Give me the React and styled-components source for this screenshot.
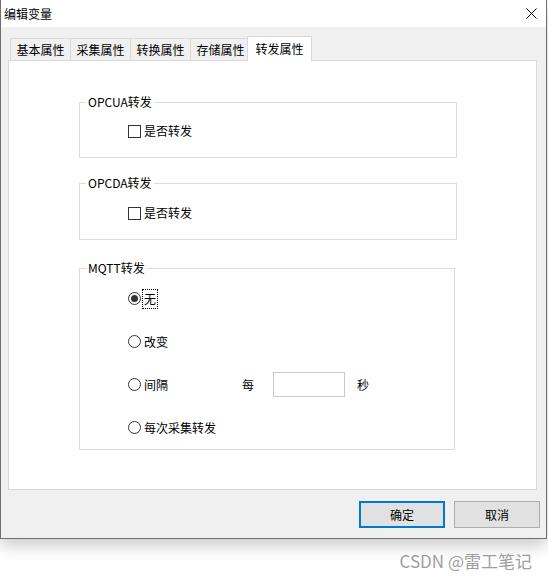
import styled, { createGlobalStyle } from "styled-components";

const GlobalStyle = createGlobalStyle`
  html, body {
    margin: 0;
    background: #ffffff;
  }
  body {
    font-family: "Noto Sans CJK SC", "Noto Sans", sans-serif;
    font-size: 12px;
    color: #000;
  }
`;

const Page = styled.div`
  width: 548px;
  height: 580px;
  display: flex;
  flex-direction: column;
  overflow: hidden;
`;

const Window = styled.div`
  width: 547px;
  height: 539px;
  box-sizing: border-box;
  border: 1px solid #6f6f6f;
  border-top: none;
  background: #f0f0f0;
  box-shadow: 0 6px 16px rgba(0, 0, 0, 0.22);
  display: flex;
  flex-direction: column;
`;

const TitleBar = styled.div`
  height: 27px;
  flex-shrink: 0;
  background: #ffffff;
  display: flex;
  align-items: center;
  justify-content: space-between;
  padding: 0 9px 0 3px;
  line-height: 16px;
`;

const Body = styled.div`
  flex: 1;
  display: flex;
  flex-direction: column;
  padding: 9px 9px 10px 7px;
`;

const TabStrip = styled.div`
  height: 24px;
  display: flex;
  align-items: flex-end;
  padding-left: 2px;
`;

const Tab = styled.div`
  box-sizing: border-box;
  width: ${(p) => (p.$active ? "65px" : "61px")};
  height: ${(p) => (p.$active ? "25px" : "22px")};
  margin: ${(p) => (p.$active ? "0 -2px -1px -3px" : "0 -1px 0 0")};
  border: 1px solid #d9d9d9;
  border-bottom: none;
  background: ${(p) => (p.$active ? "#ffffff" : "#f0f0f0")};
  position: relative;
  z-index: ${(p) => (p.$active ? 2 : 1)};
  display: flex;
  align-items: center;
  justify-content: center;
  line-height: 16px;
`;

const Panel = styled.div`
  box-sizing: border-box;
  width: 529px;
  height: 430px;
  background: #ffffff;
  border: 1px solid #d9d9d9;
  padding: 33px 0 0 70px;
  display: flex;
  flex-direction: column;
`;

const Group = styled.fieldset`
  box-sizing: border-box;
  width: ${(p) => p.$width}px;
  margin: ${(p) => p.$top}px 0 0 0;
  padding: 0;
  border: 1px solid #dcdcdc;
  min-width: 0;
`;

const Legend = styled.legend`
  margin-left: 6px;
  padding: 0 2px;
  line-height: 16px;
  font-size: 12px;
`;

const GroupBody = styled.div`
  display: flex;
  flex-direction: column;
  gap: ${(p) => p.$gap || 0}px;
  padding: ${(p) => p.$pt}px 0 ${(p) => p.$pb}px 48px;
`;

const Row = styled.label`
  display: flex;
  align-items: center;
  height: ${(p) => p.$h || 16}px;
  line-height: 16px;
`;

const Checkbox = styled.span`
  box-sizing: border-box;
  width: 13px;
  height: 13px;
  border: 1px solid #333333;
  background: #ffffff;
  margin-right: 3px;
`;

const Radio = styled.span`
  box-sizing: border-box;
  width: 13px;
  height: 13px;
  border-radius: 50%;
  border: 1px solid #333333;
  background: #ffffff;
  margin-right: 3px;
  display: flex;
  align-items: center;
  justify-content: center;

  &::after {
    content: "";
    width: 7px;
    height: 7px;
    border-radius: 50%;
    background: #333333;
    display: ${(p) => (p.$checked ? "block" : "none")};
  }
`;

const Text = styled.span`
  ${(p) => (p.$focus ? "outline: 1px dotted #000; outline-offset: 1px;" : "")}
  margin-left: ${(p) => p.$ml || 0}px;
`;

const NumberBox = styled.span`
  box-sizing: border-box;
  width: 72px;
  height: 25px;
  margin-left: 19px;
  border: 1px solid #c8c8c8;
  background: #ffffff;
`;

const ButtonRow = styled.div`
  display: flex;
  justify-content: flex-end;
  gap: 9px;
  margin-top: 11px;
  margin-right: -3px;
`;

const Button = styled.button`
  box-sizing: border-box;
  width: 86px;
  height: 27px;
  font-family: inherit;
  font-size: 12px;
  color: #000;
  background: #e1e1e1;
  border: ${(p) => (p.$primary ? "2px solid #0078d7" : "1px solid #adadad")};
  padding: 0;
`;

const Watermark = styled.div`
  align-self: flex-end;
  margin: 12px 16px 0 0;
  font-size: 17px;
  line-height: 20px;
  color: #9e9e9e;
  font-family: "Noto Sans CJK SC", "Noto Sans", sans-serif;
`;

function CloseIcon() {
  return (
    <svg width="11" height="11" viewBox="0 0 11 11">
      <path d="M0.5 0.5 L10.5 10.5 M10.5 0.5 L0.5 10.5" stroke="#000" strokeWidth="1" fill="none" />
    </svg>
  );
}

const tabs = ["基本属性", "采集属性", "转换属性", "存储属性", "转发属性"];

export default function App() {
  return (
    <>
      <GlobalStyle />
      <Page>
        <Window>
          <TitleBar>
            <span>编辑变量</span>
            <CloseIcon />
          </TitleBar>
          <Body>
            <TabStrip>
              {tabs.map((t, i) => (
                <Tab key={t} $active={i === 4}>{t}</Tab>
              ))}
            </TabStrip>
            <Panel>
              <Group $width={378} $top={0}>
                <Legend>OPCUA转发</Legend>
                <GroupBody $pt={13} $pb={18}>
                  <Row>
                    <Checkbox />
                    <Text>是否转发</Text>
                  </Row>
                </GroupBody>
              </Group>

              <Group $width={378} $top={17}>
                <Legend>OPCDA转发</Legend>
                <GroupBody $pt={14} $pb={18}>
                  <Row>
                    <Checkbox />
                    <Text>是否转发</Text>
                  </Row>
                </GroupBody>
              </Group>

              <Group $width={376} $top={20}>
                <Legend>MQTT转发</Legend>
                <GroupBody $pt={10} $pb={9} $gap={18}>
                  <Row $h={25}>
                    <Radio $checked />
                    <Text $focus>无</Text>
                  </Row>
                  <Row $h={25}>
                    <Radio />
                    <Text>改变</Text>
                  </Row>
                  <Row $h={25}>
                    <Radio />
                    <Text>间隔</Text>
                    <Text $ml={74}>每</Text>
                    <NumberBox />
                    <Text $ml={12}>秒</Text>
                  </Row>
                  <Row $h={25}>
                    <Radio />
                    <Text>每次采集转发</Text>
                  </Row>
                </GroupBody>
              </Group>
            </Panel>
            <ButtonRow>
              <Button $primary>确定</Button>
              <Button>取消</Button>
            </ButtonRow>
          </Body>
        </Window>
        <Watermark>CSDN @雷工笔记</Watermark>
      </Page>
    </>
  );
}
